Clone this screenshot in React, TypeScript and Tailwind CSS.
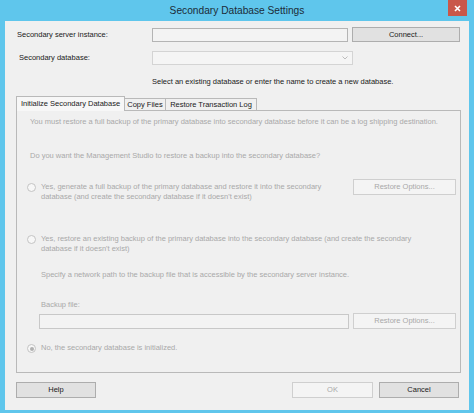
import React from "react"

const font = "font-['Liberation_Sans',Arial,sans-serif]"

function Button({ label, w, disabled = false }: { label: string; w: string; disabled?: boolean }) {
  return (
    <div
      className={`${w} h-[16px] flex items-center justify-center border text-[7.5px] leading-[10px] ${
        disabled ? "bg-[#f4f4f4] border-[#cfcfcf] text-[#a8a8a8]" : "bg-[#e1e1e1] border-[#adadad] text-[#1a1a1a]"
      }`}
    >
      {label}
    </div>
  )
}

function Radio({ checked = false }: { checked?: boolean }) {
  return (
    <div className="w-[9px] h-[9px] mt-[1px] shrink-0 rounded-full border border-[#c4c4c4] bg-[#f7f7f7] flex items-center justify-center">
      {checked && <div className="w-[4px] h-[4px] rounded-full bg-[#b0b0b0]" />}
    </div>
  )
}

export default function App() {
  return (
    <div className={`w-[474px] h-[413px] bg-[#5fc6ec] flex flex-col ${font}`}>
      {/* caption */}
      <div className="relative h-[21px] shrink-0 flex items-center justify-center">
        <span className="text-[10.2px] text-[#1c2c38] mt-[1px]">Secondary Database Settings</span>
        <div className="absolute top-0 right-[7px] w-[19px] h-[16px] bg-[#c9574a] flex items-center justify-center">
          <svg width="7" height="7" viewBox="0 0 7 7">
            <path d="M1 1 L6 6 M6 1 L1 6" stroke="#fff" strokeWidth="1.6" />
          </svg>
        </div>
      </div>

      {/* client area */}
      <div className="flex-1 mx-[5px] mb-[3px] bg-[#f0f0f0] flex flex-col text-[7.5px] leading-[10px] text-[#1a1a1a]">
        <div className="flex items-center mt-[6px] pl-[12px]">
          <div className="w-[135px]">Secondary server instance:</div>
          <div className="w-[196px] h-[14px] border border-[#b4b4b4] bg-[#f3f3f3]" />
          <div className="ml-[4px]">
            <div className="w-[108px] h-[15px] flex items-center justify-center border border-[#adadad] bg-[#e1e1e1]">
              Connect...
            </div>
          </div>
        </div>

        <div className="flex items-center mt-[9px] pl-[14px]">
          <div className="w-[133px]">Secondary database:</div>
          <div className="w-[201px] h-[14px] border border-[#d4d4d4] bg-[#f5f5f5] flex items-center justify-end pr-[4px]">
            <svg width="6" height="4" viewBox="0 0 6 4">
              <path d="M0.5 0.5 L3 3 L5.5 0.5" stroke="#b5b5b5" strokeWidth="0.9" fill="none" />
            </svg>
          </div>
        </div>

        <div className="mt-[12px] pl-[147px]">
          Select an existing database or enter the name to create a new database.
        </div>

        {/* tabs */}
        <div className="mt-[9px] ml-[11px] w-[445px] flex flex-col">
          <div className="h-[14px] flex items-end">
            <div className="relative z-10 w-[109px] h-[15px] -mb-[1px] bg-[#f7f7f7] border-x border-t border-[#b9b9b9] flex items-center justify-center">
              Initialize Secondary Database
            </div>
            <div className="w-[41px] h-[12px] border-r border-t border-[#b9b9b9] flex items-center justify-center">
              Copy Files
            </div>
            <div className="w-[91px] h-[12px] border-r border-t border-[#b9b9b9] flex items-center justify-center">
              Restore Transaction Log
            </div>
          </div>

          <div className="h-[263px] border border-[#b9b9b9] bg-[#f0f0f0] pl-[10px] pr-[4px] flex flex-col text-[#a9a9a9]">
            <div className="mt-[6px] ml-[3px]">
              You must restore a full backup of the primary database into secondary database before it can be a log shipping destination.
            </div>
            <div className="mt-[24px] ml-[3px]">
              Do you want the Management Studio to restore a backup into the secondary database?
            </div>

            <div className="mt-[18px] flex items-start">
              <div className="flex-1 flex gap-[5px] pt-[3px]">
                <Radio />
                <div>
                  Yes, generate a full backup of the primary database and restore it into the secondary
                  <br />
                  database (and create the secondary database if it doesn't exist)
                </div>
              </div>
              <Button label="Restore Options..." w="w-[103px]" disabled />
            </div>

            <div className="mt-[32px] flex gap-[5px]">
              <Radio />
              <div>
                Yes, restore an existing backup of the primary database into the secondary database (and create the secondary
                <br />
                database if it doesn't exist)
              </div>
            </div>

            <div className="mt-[16px] ml-[14px]">
              Specify a network path to the backup file that is accessible by the secondary server instance.
            </div>
            <div className="mt-[20px] ml-[14px]">Backup file:</div>
            <div className="mt-[3px] ml-[12px] flex items-center">
              <div className="w-[310px] h-[15px] border border-[#c8c8c8] bg-[#f3f3f3]" />
              <div className="ml-[4px]">
                <Button label="Restore Options..." w="w-[103px]" disabled />
              </div>
            </div>

            <div className="mt-[14px] flex gap-[5px]">
              <Radio checked />
              <div>No, the secondary database is initialized.</div>
            </div>
          </div>
        </div>

        {/* dialog buttons */}
        <div className="mt-[9px] ml-[11px] mr-[10px] flex items-center">
          <Button label="Help" w="w-[80px]" />
          <div className="flex-1" />
          <Button label="OK" w="w-[81px]" disabled />
          <div className="ml-[6px]">
            <Button label="Cancel" w="w-[80px]" />
          </div>
        </div>
      </div>
    </div>
  )
}
